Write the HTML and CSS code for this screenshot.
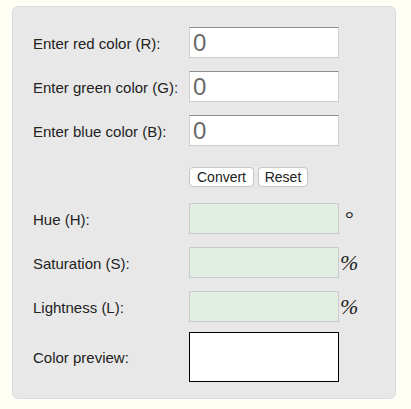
FILE: index.html
```html
<!DOCTYPE html>
<html>
<head>
<meta charset="utf-8">
<link rel="stylesheet" href="styles.css">
</head>
<body>
<div class="panel">
  <div class="row">
    <label class="label" for="r">Enter red color (R):</label>
    <input class="field" id="r" type="text" value="0">
  </div>
  <div class="row">
    <label class="label" for="g">Enter green color (G):</label>
    <input class="field" id="g" type="text" value="0">
  </div>
  <div class="row">
    <label class="label" for="b">Enter blue color (B):</label>
    <input class="field" id="b" type="text" value="0">
  </div>
  <div class="row buttons">
    <span class="label"></span>
    <div class="btns">
      <button class="btn btn-convert" type="button">Convert</button>
      <button class="btn btn-reset" type="button">Reset</button>
    </div>
  </div>
  <div class="row">
    <span class="label">Hue (H):</span>
    <input class="out" type="text" readonly>
    <span class="unit deg">°</span>
  </div>
  <div class="row">
    <span class="label">Saturation (S):</span>
    <input class="out" type="text" readonly>
    <span class="unit pct">%</span>
  </div>
  <div class="row">
    <span class="label">Lightness (L):</span>
    <input class="out" type="text" readonly>
    <span class="unit pct">%</span>
  </div>
  <div class="row preview-row">
    <span class="label">Color preview:</span>
    <div class="preview"></div>
  </div>
</div>
</body>
</html>
```
FILE: styles.css
```css
html, body {
  margin: 0;
  padding: 0;
  background: #fffff6;
}
body {
  font-family: "Liberation Sans", Arial, sans-serif;
  color: #222;
}
.panel {
  box-sizing: border-box;
  width: 384px;
  margin: 6px 0 0 12px;
  padding: 20px 20px 16px 20px;
  background: #e8e8e8;
  border: 1px solid #dcdcdc;
  border-radius: 6px;
  display: flex;
  flex-direction: column;
  gap: 13px;
}
.row {
  display: grid;
  grid-template-columns: 156px 150px auto;
  align-items: center;
}
.label {
  font-size: 15px;
  color: #222;
  padding-top: 1px;
}
.field, .out {
  box-sizing: border-box;
  width: 150px;
  height: 31px;
  margin: 0;
  padding: 0 0 0 3px;
  border: 1px solid #cfcfcf;
  border-top-color: #8e8e8e;
  background: #fff;
  font-family: "Liberation Sans", Arial, sans-serif;
  font-size: 24px;
  color: #6a6a6a;
  outline: none;
}
.out {
  background: #e0efe1;
  border: 1px solid #cacaca;
}
.buttons {
  margin-top: 8px;
  margin-bottom: 3px;
}
.btns {
  display: flex;
  gap: 4px;
}
.btn {
  box-sizing: border-box;
  height: 20px;
  margin: 0;
  padding: 0;
  background: #fff;
  border: 1px solid #c6c6c6;
  border-radius: 4px;
  font-family: "Liberation Sans", Arial, sans-serif;
  font-size: 14px;
  color: #222;
  line-height: 18px;
}
.btn-convert { width: 65px; }
.btn-reset { width: 50px; }
.unit {
  font-family: "Liberation Serif", "Times New Roman", serif;
  font-size: 22px;
  color: #222;
  padding-left: 1px;
}
.pct {
  font-style: italic;
}
.deg {
  padding-left: 6px;
  align-self: start;
  margin-top: 3px;
}
.preview-row {
  margin-top: -3px;
}
.preview {
  box-sizing: border-box;
  width: 150px;
  height: 50px;
  background: #fff;
  border: 1px solid #000;
}
```
